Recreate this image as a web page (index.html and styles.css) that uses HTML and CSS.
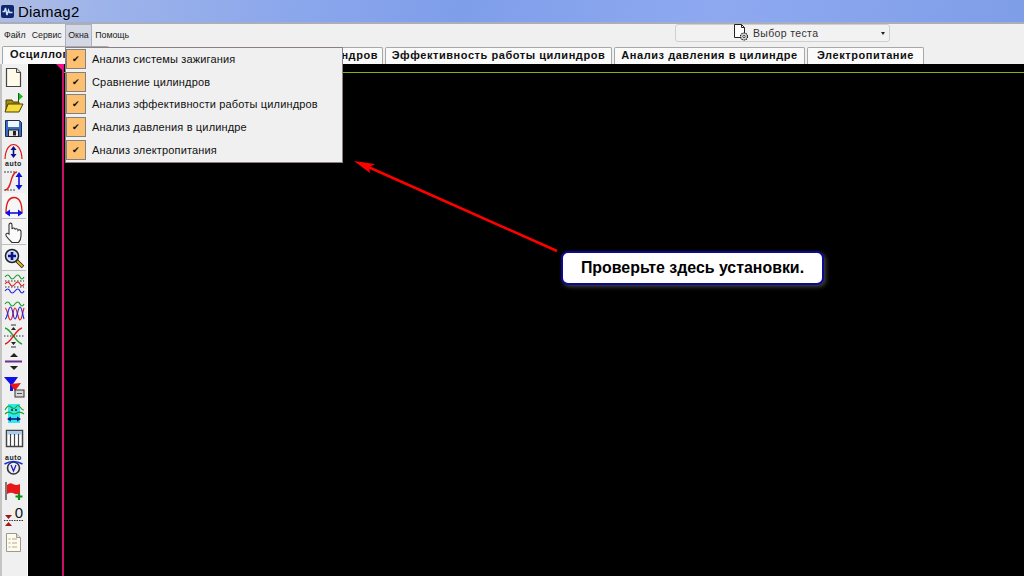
FILE: index.html
```html
<!DOCTYPE html>
<html lang="en">
<head>
  <meta charset="UTF-8">
  <title>Diamag2</title>
  <link rel="stylesheet" href="styles.css">
</head>
<body>

<div class="window">
  <div class="titlebar">
    <svg class="app-icon" width="13" height="13" viewBox="0 0 13 13">
      <rect width="13" height="13" rx="2" fill="#10286e"/>
      <path d="M1.500 6.500h2l1-3.500 1.500 7 1.500-5 1 2.500h3" fill="none" stroke="#cfe0ff" stroke-width="1.400"/>
    </svg>
    <span class="app-name">Diamag2</span>
  </div>

  <div class="menubar">
    <div class="menu-items">
      <span class="menu-item">Файл</span>
      <span class="menu-item">Сервис</span>
      <span class="menu-item active">Окна</span>
      <span class="menu-item">Помощь</span>
    </div>
    <div class="test-select">
      <svg width="20" height="18" viewBox="0 0 20 18">
        <path d="M2.500 .5h7l3 3v10h-10z" fill="#fff" stroke="#222"/>
        <path d="M9.500 .5v3h3" fill="none" stroke="#222"/>
        <circle cx="12" cy="12.500" r="3.500" fill="#ddd" stroke="#222" stroke-width="1.200" stroke-dasharray="1.500 .7"/>
        <circle cx="12" cy="12.500" r="1.200" fill="#fff" stroke="#222" stroke-width=".8"/>
      </svg>
      <span class="test-label">Выбор теста</span>
      <span class="test-caret"></span>
    </div>
  </div>

  <div class="tabs">
    <div class="tab first">Осциллограф</div>
    <div class="tab second">Сравнение цилиндров</div>
    <div class="tab third">Эффективность работы цилиндров</div>
    <div class="tab fourth">Анализ давления в цилиндре</div>
    <div class="tab fifth">Электропитание</div>
  </div>

  <div class="workspace">
    <div class="toolbar">
      <div class="tool"><svg viewBox="0 0 24 25"><path d="M4.500 4.500h10l4 4v14h-14z" fill="#fffbe8" stroke="#444" stroke-width="1.200"/><path d="M14.500 4.500v4h4" fill="#ddd" stroke="#444"/></svg></div>
      <div class="tool"><svg viewBox="0 0 24 25"><path d="M4 10h6l1 2h6v8H4z" fill="#a88c10" stroke="#4c3c00"/><path d="M3 22l3-8h15l-4 8z" fill="#f4dc3c" stroke="#4c3c00"/><path d="M16.500 3v9" stroke="#106010"/><path d="M17 3l4 3.500-4 3.500z" fill="#18c018"/></svg></div>
      <div class="tool"><svg viewBox="0 0 24 25"><path d="M3.500 4.500h14l2 2v14h-16z" fill="#3a6cc0" stroke="#1c2b55"/><rect x="6" y="5" width="11" height="6" fill="#f0f4ff"/><rect x="6.500" y="14" width="10" height="6.500" fill="#e8e8e8" stroke="#222"/><rect x="11" y="15" width="3" height="4.500" fill="#222"/></svg></div>
      <div class="tool"><svg viewBox="0 0 24 25"><path d="M3 17C3.500 6 8 2.500 11.500 2.500S19.500 6 20 17" fill="none" stroke="#e01818" stroke-width="1.200"/><path d="M11.500 6v8" stroke="#10108a" stroke-width="1.600"/><path d="M8.500 8l3-4 3 4zM8.500 12l3 4 3-4z" fill="#10108a"/><text x="11.500" y="24" class="auto-text" text-anchor="middle">auto</text></svg></div>
      <div class="tool"><svg viewBox="0 0 24 25"><path d="M2 4h12M2 22h12" stroke="#444" stroke-dasharray="2 1"/><path d="M3 22C10 22 8 4 15 4" fill="none" stroke="#e01818" stroke-width="1.300"/><path d="M17 6v14" stroke="#1010e0" stroke-width="1.600"/><path d="M13.500 9l3.500-5 3.500 5zM13.500 17l3.500 5 3.500-5z" fill="#1010e0"/></svg></div>
      <div class="tool line"><svg viewBox="0 0 24 25"><path d="M4 20C4 8 8 4.500 12 4.500S20 8 20 20" fill="none" stroke="#e01818" stroke-width="1.300"/><path d="M6 20h12" stroke="#1010e0" stroke-width="1.600"/><path d="M8 16.500l-5 3.500 5 3.500zM16 16.500l5 3.500-5 3.500z" fill="#1010e0"/></svg></div>
      <div class="tool line"><svg viewBox="0 0 24 25"><path d="M7 14V6c0-2.500 3-2.500 3 0v4c.5-1.500 3-1.500 3 .5 .5-1.300 3-1 3 .8 .8-1 3-.6 3 1.200v4.500c0 3-1 5-2.500 6.500H10c-1.500-1.500-5-5-6-7-.7-2 1.500-3 3-1.500z" fill="#fbfbfb" stroke="#333" stroke-width="1.100"/></svg></div>
      <div class="tool line"><svg viewBox="0 0 24 25"><path d="M14 15l7 7" stroke="#222" stroke-width="3.600"/><path d="M14.500 15.500l6 6" stroke="#e8b820" stroke-width="1.800"/><circle cx="10" cy="11" r="6.500" fill="#c8e0f8" stroke="#222" stroke-width="1.500"/><path d="M6 11h8M10 7v8" stroke="#10108a" stroke-width="2.600"/></svg></div>
      <div class="tool"><svg viewBox="0 0 24 25"><path d="M3 6q3-4 5 0t5 0 5 0 4 0" fill="none" stroke="#20a030" stroke-width="1.200"/><path d="M3 13q3-4 5 0t5 0 5 0 4 0" fill="none" stroke="#e02020" stroke-width="1.200"/><path d="M3 20q3-4 5 0t5 0 5 0 4 0" fill="none" stroke="#2828e0" stroke-width="1.200"/><path d="M3 10h19M3 16h19" stroke="#333" stroke-dasharray="1.500 1.500"/></svg></div>
      <div class="tool"><svg viewBox="0 0 24 25"><path d="M3 7q3-4 5 0t5 0 5 0 4 0" fill="none" stroke="#20a030" stroke-width="1.200"/><path d="M3 11c2.500 0 3 12 5.500 12S11 11 13 11s3 12 5 12 2.500-8 4-12" fill="none" stroke="#e02020" stroke-width="1.200"/><path d="M3 22c2.500 0 3-12 5.500-12S11 22 13 22s3-12 5-12 2.500 8 4 12" fill="none" stroke="#2828e0" stroke-width="1.200"/></svg></div>
      <div class="tool"><svg viewBox="0 0 24 25"><path d="M3 5C9 6 14 20 20 21" fill="none" stroke="#20a030" stroke-width="1.300"/><path d="M3 21C9 20 14 6 20 5" fill="none" stroke="#e02020" stroke-width="1.300"/><path d="M2 13h20" stroke="#333" stroke-dasharray="1.500 1.500"/><path d="M9 7h5l-2.500-3zM9 19h5l-2.500 3z" fill="#222"/><path d="M9 2h5M9 24h5" stroke="#333"/></svg></div>
      <div class="tool"><svg viewBox="0 0 24 25"><path d="M8 8l4-4 4 4z" fill="#222"/><path d="M3 12.500h17" stroke="#6a3090" stroke-width="2"/><path d="M8 17l4 4 4-4z" fill="#222"/></svg></div>
      <div class="tool"><svg viewBox="0 0 24 25"><path d="M2 2h14l-5 7v7H8V9z" fill="#1010e8"/><path d="M8 9l11-1-6 8z" fill="#e81818"/><rect x="13" y="15" width="9" height="7" fill="#d8d8d8" stroke="#333"/><path d="M15 18.500h5" stroke="#555"/></svg></div>
      <div class="tool"><svg viewBox="0 0 24 25"><rect x="6" y="3" width="12" height="19" fill="#30e8e8"/><path d="M3 9q3-6 6-3t5 0 4 0 4 3M3 13q3-3 6-1t6 0 7 1" fill="none" stroke="#20a030" stroke-width="1.200"/><circle cx="10" cy="9" r="1" fill="#222"/><circle cx="14" cy="9" r="1" fill="#222"/><path d="M8 18h8" stroke="#10108a" stroke-width="1.500"/><path d="M9 15.500l-4 2.500 4 2.500zM15 15.500l4 2.500-4 2.500z" fill="#10108a"/></svg></div>
      <div class="tool"><svg viewBox="0 0 24 25"><rect x="4.500" y="4.500" width="16" height="16" fill="#fff" stroke="#444" stroke-width="1.500"/><rect x="5" y="5" width="15" height="3.500" fill="#a8cce8"/><path d="M8.500 8v12M12.500 8v12M16.500 8v12" stroke="#444" stroke-width="1.200"/></svg></div>
      <div class="tool"><svg viewBox="0 0 24 25"><text x="11.500" y="8" class="auto-text" text-anchor="middle">auto</text><circle cx="11.500" cy="16" r="6" fill="#eee" stroke="#333" stroke-width="1.600"/><path d="M9 13l2.500 6 2.500-6" fill="none" stroke="#2020c0" stroke-width="1.300"/><path d="M2.500 12q9-5 18 0" fill="none" stroke="#1030e0" stroke-width="1.600"/></svg></div>
      <div class="tool"><svg viewBox="0 0 24 25"><path d="M4 4v18" stroke="#555" stroke-width="1.500"/><path d="M5 7q3-3 6-1t7 0v9q-3 2-6 .5t-7 .5z" fill="#e81818"/><path d="M17 15v7M13.500 18.500h7" stroke="#108a10" stroke-width="2.200"/></svg></div>
      <div class="tool"><svg viewBox="0 0 24 25"><path d="M3 11h7l-3.500 4zM3 22h7l-3.500-4z" fill="#a01818"/><path d="M2 16.500h20" stroke="#333" stroke-dasharray="1.500 1"/><text x="17" y="14" class="zero-text" text-anchor="middle">0</text></svg></div>
      <div class="tool"><svg viewBox="0 0 24 25"><path d="M4.500 3.500h10l4 4v14h-14z" fill="#fffbe8" stroke="#999"/><path d="M14.500 3.500v4h4" fill="#ddd" stroke="#999"/><path d="M6.500 9h2M6.500 13h2M6.500 17h2M10 9h5M10 13h5M10 17h5" stroke="#aaa"/></svg></div>
    </div>

    <div class="scope">
      <div class="grid-line"></div>
      <div class="cursor-line"><span class="cursor-mark"></span></div>
    </div>
  </div>

  <div class="popup-menu">
    <div class="check-row"><span class="check-box">✔</span>Анализ системы зажигания</div>
    <div class="check-row"><span class="check-box">✔</span>Сравнение цилиндров</div>
    <div class="check-row"><span class="check-box">✔</span>Анализ эффективности работы цилиндров</div>
    <div class="check-row"><span class="check-box">✔</span>Анализ давления в цилиндре</div>
    <div class="check-row"><span class="check-box">✔</span>Анализ электропитания</div>
  </div>

  <svg class="arrow" width="210" height="100" viewBox="0 0 210 100">
    <path d="M207 96L16 11" stroke="#ff0000" stroke-width="2.500"/>
    <path d="M4 6L25 9L19 12L20 18z" fill="#ff0000"/>
  </svg>

  <div class="callout">Проверьте здесь установки.</div>
</div>

</body>
</html>
```

FILE: styles.css
```css
* {
  margin: 0;
  padding: 0;
  box-sizing: border-box;
}

html, body {
  width: 100%;
  height: 100%;
  background: #000;
  font-family: "Liberation Sans", sans-serif;
  overflow: hidden;
}

.window {
  width: 1024px;
  height: 576px;
  position: relative;
  display: flex;
  flex-direction: column;
  background: #f0f0f0;
}

.titlebar {
  height: 24px;
  display: flex;
  align-items: center;
  gap: 4px;
  padding-left: 1px;
  background: linear-gradient(100deg, #b0bde2 0, #9db3ea 10%, #8aa6ec 30%, #7f9eea 45%, #8ea9f0 70%, #7f9ee8 100%);
  border-bottom: 2px solid #a8aebc;
}

.app-name {
  font-size: 15px;
  letter-spacing: .2px;
  color: #000;
}

.menubar {
  height: 22px;
  display: flex;
  justify-content: space-between;
  padding-right: 134px;
  background: #f0f0f0;
}

.menu-items {
  display: flex;
  align-items: center;
  padding-left: 1px;
}

.menu-item {
  font-size: 8.800px;
  color: #222;
  padding: 0 3px;
  line-height: 21px;
}

.menu-item.active {
  background: #d4d8e4;
  border: 1px solid #aab0c0;
  padding: 0 2.500px;
}

.test-select {
  width: 215px;
  height: 18px;
  display: flex;
  align-items: center;
  padding-left: 56px;
  gap: 1px;
  border: 1px solid #cfcfcf;
  border-radius: 3px;
  background: #f2f2f2;
  position: relative;
}

.test-label {
  font-size: 10.500px;
  letter-spacing: .35px;
  color: #333;
}

.test-caret {
  position: absolute;
  right: 4px;
  top: 7px;
  border: 2px solid transparent;
  border-top: 3px solid #222;
}

.tabs {
  height: 18px;
  display: flex;
  align-items: flex-end;
  padding-left: 2px;
  gap: 2px;
}

.tab {
  height: 17px;
  border: 1px solid #a8a8a8;
  border-bottom: 0;
  border-radius: 2px 2px 0 0;
  background: #fafafa;
  font-size: 11px;
  font-weight: bold;
  letter-spacing: .55px;
  line-height: 15px;
  color: #111;
  text-align: center;
  white-space: nowrap;
}

.tab.first { width: 107px; height: 18px; text-align: left; padding-left: 7px; }
.tab.second { width: 272px; text-align: right; padding-right: 4px; }
.tab.third { width: 227px; }
.tab.fourth { width: 191px; }
.tab.fifth { width: 117px; }

.workspace {
  flex: 1;
  display: flex;
  min-height: 0;
}

.toolbar {
  width: 28px;
  display: flex;
  flex-direction: column;
  border-left: 2px solid #c4c4c4;
  border-right: 1px solid #fff;
  background: #f0f0f0;
}

.tool {
  width: 24px;
  height: 25.900px;
  flex-shrink: 0;
}

.tool.line {
  border-bottom: 1px solid #bdbdbd;
  background: #f6f6f6;
}

.tool svg {
  display: block;
  width: 24px;
  height: 25px;
}

.auto-text {
  font-size: 7px;
  font-weight: bold;
  letter-spacing: .5px;
  font-family: "Liberation Sans", sans-serif;
  fill: #222;
}

.zero-text {
  font-size: 15px;
  font-family: "Liberation Sans", sans-serif;
  fill: #111;
}

.scope {
  flex: 1;
  background: #000;
  position: relative;
}

.grid-line {
  position: absolute;
  left: 35px;
  right: 0;
  top: 8px;
  height: 1px;
  background: #84b414;
}

.cursor-line {
  position: absolute;
  left: 34px;
  top: 0;
  bottom: 0;
  width: 2px;
  background: #c8106a;
}

.cursor-mark {
  position: absolute;
  left: -6px;
  top: 0;
  border-top: 7px solid #f0108a;
  border-left: 7px solid transparent;
  border-right: 1px solid transparent;
}

.popup-menu {
  position: absolute;
  left: 65px;
  top: 47px;
  width: 278px;
  height: 116px;
  background: #f0f0f0;
  border: 1px solid #8a7f88;
  display: flex;
  flex-direction: column;
}

.check-row {
  height: 22.600px;
  display: flex;
  align-items: center;
  gap: 6px;
  font-size: 11px;
  letter-spacing: .16px;
  color: #111;
}

.check-box {
  width: 20px;
  height: 20px;
  display: flex;
  align-items: center;
  justify-content: center;
  background: #fdc070;
  border: 1px solid #808080;
  font-size: 9px;
  color: #111;
}

.arrow {
  position: absolute;
  left: 350px;
  top: 155px;
}

.callout {
  position: absolute;
  left: 561px;
  top: 251px;
  width: 263px;
  height: 34px;
  border: 2px solid #0a0a96;
  border-radius: 7px;
  background: #fff;
  box-shadow: 2px 2px 4px rgba(255, 255, 255, .25);
  font-size: 15.900px;
  font-weight: bold;
  line-height: 30px;
  text-align: center;
  color: #000;
}
```
